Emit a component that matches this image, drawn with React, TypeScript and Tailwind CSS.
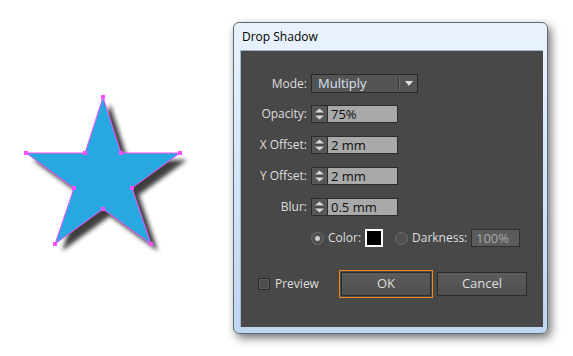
import React from 'react'

const font = { fontFamily: '"Open Sans", "DejaVu Sans", sans-serif' }

// star outline points, in page coordinates
const starPts = [
  [103, 97], [121, 153], [180, 153], [132, 188], [151, 244],
  [103, 209], [55, 244], [74, 188], [26, 153], [85, 153],
]

function Star() {
  const d = starPts.map((p) => p.join(',')).join(' ')
  return (
    <svg width="233" height="356" className="shrink-0">
      <defs>
        <filter id="ds" x="-20%" y="-20%" width="150%" height="150%">
          <feGaussianBlur stdDeviation="2.2" />
        </filter>
      </defs>
      <polygon points={d} fill="#2b2b2b" opacity="0.9" transform="translate(7,7)" filter="url(#ds)" />
      <polygon points={d} fill="#27a8e0" stroke="#ff4dff" strokeWidth="1" />
      {starPts.map(([x, y], i) => (
        <rect key={i} x={x - 2} y={y - 2} width="4" height="4" fill="#ff4dff" />
      ))}
    </svg>
  )
}

function Spinner() {
  return (
    <div className="w-[17px] h-[18px] border border-[#2c2c2c] bg-[#575757] flex flex-col items-center justify-center">
      <svg width="11" height="14" viewBox="0 0 11 14">
        <polygon points="5.5,1.5 10,5.5 1,5.5" fill="#d6d6d6" />
        <rect x="1" y="6.5" width="9" height="1" fill="#3a3a3a" />
        <polygon points="1,8.5 10,8.5 5.5,12.5" fill="#d6d6d6" />
      </svg>
    </div>
  )
}

function NumField({ label, value }: { label: string; value: string }) {
  return (
    <div className="flex items-center h-[18px]">
      <div className="w-[67px] text-right text-[#dedede] pr-[1px]">{label}</div>
      <div className="ml-[3px] flex">
        <Spinner />
        <div className="w-[70px] h-[18px] border border-l-0 border-[#2c2c2c] bg-[#a9a9a9] text-[#111] pl-[3px] leading-[16px] text-[13px]">
          {value}
        </div>
      </div>
    </div>
  )
}

function Radio({ on }: { on?: boolean }) {
  return (
    <div className="w-[13px] h-[13px] shrink-0 rounded-full border border-[#6f6f6f] bg-[#505050] flex items-center justify-center">
      {on && <div className="w-[5px] h-[5px] rounded-full bg-[#cfcfcf]" />}
    </div>
  )
}

export default function App() {
  return (
    <div className="w-[573px] h-[356px] bg-white flex overflow-hidden" style={font}>
      <Star />
      <div className="mt-[22px] w-[315px] h-[312px] rounded-[6px] border border-[#5e6a78] bg-gradient-to-b from-[#eaf3fc] via-[#d3e5f8] to-[#bfd6f0] shadow-[3px_4px_10px_rgba(0,0,0,0.55)] flex flex-col pl-[6px] pr-[4px] pb-[6px]">
        <div className="h-[27px] flex items-center pl-[2px] text-[12px] text-black">Drop Shadow</div>
        <div className="flex-1 bg-[#484848] border-t border-l border-[#9fb6cf] text-[12px] text-[#dedede] flex flex-col pt-[23px]">
          {/* mode */}
          <div className="flex items-center h-[19px]">
            <div className="w-[67px] text-right pr-[1px]">Mode:</div>
            <div className="ml-[3px] w-[107px] h-[19px] border border-[#2a2a2a] bg-[#545454] flex items-center">
              <div className="flex-1 pl-[6px] text-[#d8e4f0] text-[13px] leading-none">Multiply</div>
              <div className="w-[1px] h-[13px] bg-[#383838] border-r border-[#6a6a6a] box-content" />
              <div className="w-[17px] flex justify-center">
                <svg width="8" height="5" viewBox="0 0 8 5">
                  <polygon points="0,0 8,0 4,5" fill="#e0e0e0" />
                </svg>
              </div>
            </div>
          </div>

          <div className="mt-[12px] flex flex-col gap-[13px]">
            <NumField label="Opacity:" value="75%" />
            <NumField label="X Offset:" value="2 mm" />
            <NumField label="Y Offset:" value="2 mm" />
            <NumField label="Blur:" value="0.5 mm" />
          </div>

          {/* color / darkness */}
          <div className="mt-[13px] flex items-center h-[18px] pl-[70px]">
            <Radio on />
            <span className="ml-[4px] w-[37px]">Color:</span>
            <div className="w-[18px] h-[18px] shrink-0 border-2 border-white bg-black" />
            <div className="ml-[12px]"><Radio /></div>
            <span className="ml-[4px] w-[59px]">Darkness:</span>
            <div className="w-[49px] h-[18px] shrink-0 border border-[#2f2f2f] bg-[#5b5b5b] text-[#a8a8a8] text-[13px] leading-[16px] pl-[4px]">
              100%
            </div>
          </div>

          {/* buttons */}
          <div className="mt-[23px] flex items-center pl-[17px]">
            <div className="w-[81px] flex items-center">
              <div className="w-[12px] h-[12px] border border-[#2c2c2c] bg-[#4e4e4e] shadow-[inset_0_0_0_1px_#5a5a5a]" />
              <span className="ml-[5px]">Preview</span>
            </div>
            <div className="p-[1px] border border-[#f08a1c]">
              <div className="w-[90px] h-[24px] border border-[#2a2a2a] bg-gradient-to-b from-[#5c5c5c] to-[#4f4f4f] flex items-center justify-center text-[13px]">
                OK
              </div>
            </div>
            <div className="ml-[4px] w-[90px] h-[24px] border border-[#2a2a2a] bg-gradient-to-b from-[#5c5c5c] to-[#4f4f4f] flex items-center justify-center text-[13px]">
              Cancel
            </div>
          </div>
        </div>
      </div>
    </div>
  )
}
